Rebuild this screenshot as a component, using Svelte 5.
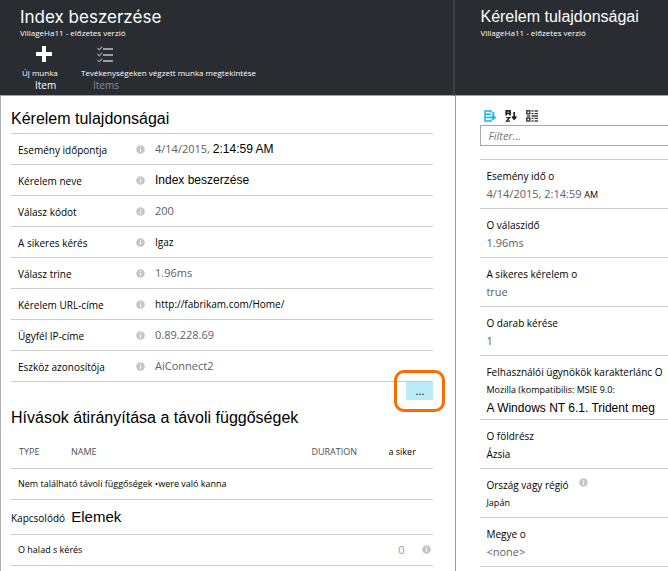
<script>
  const details = [
    { label: 'Esemény időpontja', value: '4/14/2015,', tone: 'soft', extra: '2:14:59 AM' },
    { label: 'Kérelem neve', value: 'Index beszerzése', tone: 'arial' },
    { label: 'Válasz kódot', value: '200', tone: 'soft' },
    { label: 'A sikeres kérés', value: 'Igaz', tone: 'dark' },
    { label: 'Válasz trine', value: '1.96ms', tone: 'soft' },
    { label: 'Kérelem URL-címe', value: 'http://fabrikam.com/Home/', tone: 'dark' },
    { label: 'Ügyfél IP-címe', value: '0.89.228.69', tone: 'soft' },
    { label: 'Eszköz azonosítója', value: 'AiConnect2', tone: 'soft' }
  ];

  const properties = [
    { label: 'Esemény idő o', value: '4/14/2015, 2:14:59', suffix: 'AM', tone: 'soft' },
    { label: 'O válaszidő', value: '1.96ms', tone: 'soft' },
    { label: 'A sikeres kérelem o', value: 'true', tone: 'soft' },
    { label: 'O darab kérése', value: '1', tone: 'soft' },
    { label: 'Felhasználói ügynökök karakterlánc O', value: 'Mozilla (kompatibilis: MSIE 9.0:', tone: 'small', more: 'A Windows NT 6.1. Trident meg' },
    { label: 'O földrész', value: 'Ázsia', tone: 'dark' },
    { label: 'Ország vagy régió', value: 'Japán', tone: 'small', info: true },
    { label: 'Megye o', value: '<none>', tone: 'soft' }
  ];

  let filter = $state('');
</script>

{#snippet info()}
  <svg class="info" viewBox="0 0 9 9" aria-hidden="true">
    <circle cx="4.5" cy="4.5" r="4.3" fill="#c6c6c6" />
    <path d="M4.5 1.8v1.1M4.5 3.8v3" stroke="#fff" stroke-width="1" />
  </svg>
{/snippet}

<div class="portal">
  <section class="blade main">
    <header>
      <h1 class="wide">Index beszerzése</h1>
      <p>VillageHa11 - előzetes verzió</p>
      <div class="commands">
        <button type="button" class="command">
          <svg viewBox="0 0 16 16" aria-hidden="true"><path d="M6 0h4v6h6v4h-6v6H6v-6H0V6h6z" fill="#fff" /></svg>
          <span class="first">Új munka</span>
          <span class="second">Item</span>
        </button>
        <button type="button" class="command muted">
          <svg viewBox="0 0 16 16" aria-hidden="true">
            <path d="M6 3h10M6 9h10M6 15h10" stroke="#9b9fa2" stroke-width="1.8" />
            <path d="M0.5 2l1.8 1.8L5.2.6M0.5 8l1.8 1.8 2.9-3.2M0.5 14l1.8 1.8 2.9-3.2" fill="none" stroke="#9b9fa2" stroke-width="1.2" />
          </svg>
          <span>Tevékenységeken végzett munka megtekintése</span>
          <span class="second">Items</span>
        </button>
      </div>
    </header>

    <div class="content">
      <h2 class="request">Kérelem tulajdonságai</h2>
      <dl class="details">
        {#each details as row}
          <div>
            <dt>{row.label}</dt>
            {@render info()}
            <dd class={row.tone}>{row.value}{#if row.extra}&nbsp;<span class="arial">{row.extra}</span>{/if}</dd>
          </div>
        {/each}
      </dl>
      <div class="more">
        <button type="button" aria-label="Továbbiak">...</button>
      </div>

      <h2 class="calls">Hívások átirányítása a távoli függőségek</h2>
      <table>
        <thead>
          <tr><th class="type">TYPE</th><th>NAME</th><th class="duration">DURATION</th><th class="success">a siker</th></tr>
        </thead>
        <tbody>
          <tr><td colspan="4">Nem található távoli függőségek •were való kanna</td></tr>
        </tbody>
      </table>

      <h2 class="related"><small>Kapcsolódó</small> Elemek</h2>
      <div class="progress">
        <span>O halad s kérés</span>
        <span class="count">0</span>
        {@render info()}
      </div>
    </div>
  </section>

  <section class="blade side">
    <header>
      <h1>Kérelem tulajdonságai</h1>
      <p>VillageHa11 - előzetes verzió</p>
    </header>

    <div class="content">
      <div class="tools">
        <button type="button" aria-label="Rendezés">
          <svg viewBox="0 0 12 12" fill="none" stroke="#14b4f0" aria-hidden="true">
            <path d="M7 2.5V1H1v10h6V9.5M1 4.3h6M1 7.6h6" stroke-width="1.5" />
            <path d="M9.3 2v7M7.2 6.5l2.1 2.6 2.1-2.6" stroke-width="1.8" />
          </svg>
        </button>
        <button type="button" aria-label="Betűrend">
          <svg viewBox="0 0 12 12" fill="none" stroke="#222" aria-hidden="true">
            <path d="M1.2 5.5V.8h3.8v4.7M1.2 3.4h3.8" stroke-width="1.7" />
            <path d="M1.2 7.6h3.4L1.5 11.2h3.6" stroke-width="1.3" />
            <path d="M9.2 2v7M7.1 6.5l2.1 2.6 2.1-2.6" stroke-width="1.7" />
          </svg>
        </button>
        <button type="button" aria-label="Csoportosítás">
          <svg viewBox="0 0 12 12" fill="none" stroke="#444" aria-hidden="true">
            <path d="M.8.8h3v3h-3zM.8 8h3v3h-3z" stroke-width="1.5" />
            <path d="M5.5 1h2M8.5 1H12M5.5 3.6h2M8.5 3.6H12M1 6h3M5.5 6H12M5.5 8.4h2M8.5 8.4H12M5.5 11h2M8.5 11H12" stroke-width="1.3" />
          </svg>
        </button>
      </div>
      <input type="text" placeholder="Filter..." aria-label="Filter" bind:value={filter} />
      <dl class="properties">
        {#each properties as item}
          <div>
            <dt>{item.label}{#if item.info}{@render info()}{/if}</dt>
            <dd class={item.tone}>{item.value}{#if item.suffix}&nbsp;<span class="small">{item.suffix}</span>{/if}</dd>
            {#if item.more}<dd class="arial agent">{item.more}</dd>{/if}
          </div>
        {/each}
      </dl>
    </div>
  </section>
</div>

<style>
  :global(body) {
    margin: 0;
    background: #fff;
  }
  .portal {
    display: grid;
    grid-template-columns: minmax(0, 15fr) minmax(0, 7fr);
    min-height: 100vh;
    overflow: hidden;
    font: 11px/14px 'Open Sans', 'Noto Sans', sans-serif;
    color: #000;
  }
  .blade {
    display: flex;
    flex-direction: column;
  }
  h1, h2, p, dl, dd, dt {
    margin: 0;
    font-weight: 400;
  }
  button {
    padding: 0;
    border: 0;
    background: none;
    font: inherit;
    color: inherit;
    cursor: pointer;
  }
  header {
    box-sizing: border-box;
    height: 96px;
    padding: 7px 0 0 20px;
    background: #292d31;
    border-bottom: 1px solid #8fa6cf;
    color: #fff;
  }
  .main header {
    border-right: 2px solid #3d4145;
  }
  .side header {
    padding-left: 25px;
  }
  h1 {
    font: 16px/20px 'Liberation Sans', Arial, sans-serif;
  }
  h1.wide {
    font: 17px/20px Inter, sans-serif;
  }
  header p {
    font-size: 8px;
    line-height: 12px;
  }
  .commands {
    display: flex;
    gap: 13px;
    padding-top: 7px;
  }
  .command {
    display: flex;
    flex-direction: column;
    width: 48px;
    font-size: 8px;
    line-height: 12px;
    white-space: nowrap;
    text-align: left;
  }
  .command svg {
    width: 16px;
    height: 16px;
    margin: 0 0 5px 16px;
  }
  .command .first {
    padding-left: 2px;
  }
  .command .second {
    padding-left: 15px;
    font-size: 10px;
  }
  .command.muted .second {
    padding-left: 12px;
    color: #8a8e91;
  }
  .main .content {
    flex: 1;
    padding: 0 22px 0 10px;
    border-left: 1px solid #adb0b5;
  }
  h2 {
    font: 16px/36px 'Liberation Sans', Arial, sans-serif;
  }
  h2.request {
    padding-top: 9px;
    line-height: 28px;
    border-bottom: 1px solid #ccc;
  }
  .info {
    flex: none;
    width: 9px;
    height: 9px;
  }
  .details > div {
    display: flex;
    align-items: center;
    height: 30px;
    padding-left: 7px;
    border-bottom: 1px solid #ccc;
  }
  dt {
    font-size: 10px;
  }
  .details dt {
    width: 118px;
    padding-top: 2px;
  }
  .details dd {
    padding-left: 10px;
  }
  .soft {
    color: #5c6066;
  }
  .dark {
    font-size: 10px;
  }
  .arial {
    font-family: 'Liberation Sans', Arial, sans-serif;
    font-size: 12px;
    color: #000;
  }
  .small {
    font-size: 9px;
    color: #000;
  }
  span.small {
    line-height: 14px;
  }
  .more {
    display: flex;
    justify-content: flex-end;
  }
  .more button {
    position: relative;
    width: 27px;
    height: 18px;
    background: #b9ebf8;
    line-height: 14px;
  }
  .more button::after {
    content: '';
    position: absolute;
    inset: -12px;
    border: 3px solid #ff6a00;
    border-radius: 10px;
  }
  table {
    width: 100%;
    table-layout: fixed;
    border-collapse: collapse;
  }
  th, td {
    box-sizing: border-box;
    height: 31px;
    padding: 0;
    border-bottom: 1px solid #ccc;
    font-size: 9px;
    font-weight: 400;
    text-align: left;
  }
  th {
    height: 32px;
    color: #4c5056;
  }
  .type {
    width: 60px;
    padding-left: 8px;
  }
  .duration {
    width: 77px;
  }
  .success {
    width: 45px;
    color: #000;
  }
  td {
    padding-left: 7px;
  }
  h2.related {
    font-size: 15px;
    line-height: 34px;
    border-bottom: 1px solid #ccc;
  }
  h2 small {
    font: 10px/14px 'Open Sans', 'Noto Sans', sans-serif;
    margin-right: 2px;
  }
  .progress {
    display: flex;
    align-items: center;
    height: 30px;
    padding: 0 2px 0 7px;
    border-bottom: 1px solid #ccc;
    font-size: 9px;
  }
  .count {
    margin: 0 18px 0 auto;
    color: #999;
    font-size: 11px;
  }
  .side .content {
    flex: 1;
    padding: 14px 0 0 24px;
    border-left: 1px solid #7f9fdc;
  }
  .tools {
    display: flex;
    gap: 9px;
    padding-left: 4px;
  }
  .tools svg {
    display: block;
    width: 12px;
    height: 12px;
  }
  input {
    display: block;
    box-sizing: border-box;
    width: 100%;
    height: 21px;
    margin: 3px 0 13px;
    padding: 0 7px;
    border: 1px solid #aaa;
    border-right: 0;
    border-radius: 0;
    font: italic 11px 'Open Sans', 'Noto Sans', sans-serif;
  }
  input::placeholder {
    color: #777;
  }
  .properties {
    border-top: 1px solid #ccc;
  }
  .properties > div {
    padding: 9px 0 3px 6px;
    border-bottom: 1px solid #ccc;
    white-space: nowrap;
  }
  .properties dt {
    display: flex;
    gap: 10px;
  }
  .properties dd {
    line-height: 22px;
  }
  .properties .agent {
    line-height: 15px;
  }
</style>
